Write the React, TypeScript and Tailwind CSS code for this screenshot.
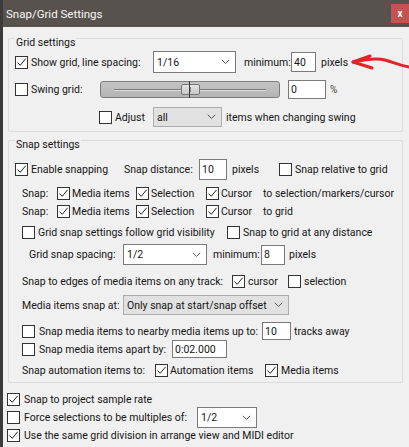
import React from "react";

function Check({ on }: { on?: boolean }) {
  return (
    <span className="w-[13px] h-[13px] shrink-0 border border-[#333333] bg-white flex items-center justify-center">
      {on && (
        <svg width="11" height="11" viewBox="0 0 11 11">
          <path d="M1.5 5.5 L4.2 8.3 L9.6 1.8" fill="none" stroke="#222222" strokeWidth="1" />
        </svg>
      )}
    </span>
  );
}

function Chevron() {
  return (
    <svg width="9" height="6" viewBox="0 0 9 6" className="shrink-0">
      <path d="M0.8 0.8 L4.5 4.5 L8.2 0.8" fill="none" stroke="#555555" strokeWidth="1" />
    </svg>
  );
}

function Combo({ cls, v, gray }: { cls: string; v: string; gray?: boolean }) {
  return (
    <div
      className={`${cls} shrink-0 border flex items-center justify-between pl-[3px] pr-[5px] ${
        gray ? "bg-[#e1e1e1] border-[#adadad]" : "bg-white border-[#7a7a7a]"
      }`}
    >
      <span>{v}</span>
      <Chevron />
    </div>
  );
}

function Input({ cls, v }: { cls: string; v: string }) {
  return (
    <div className={`${cls} shrink-0 bg-white border border-[#7a7a7a] flex items-center pl-[2px]`}>
      {v}
    </div>
  );
}

function Slider() {
  return (
    <div className="relative w-[180px] h-[17px] shrink-0 rounded-[3px] border border-[#7c7c7c] bg-gradient-to-b from-[#c4c4c4] to-[#b4b4b4] flex items-center px-[13px]">
      <div className="flex-1 h-[2px] border-t border-[#7a7a7a] border-b border-b-[#dcdcdc]" />
      <div className="absolute left-[80px] top-[2px] w-[19px] h-[11px] rounded-[2px] border border-[#777777] bg-gradient-to-b from-[#e4e4e4] to-[#c8c8c8] flex items-center justify-center">
        <div className="w-[1px] h-[5px] bg-[#888888]" />
      </div>
      <div className="absolute left-[88px] -top-[1px] w-[1px] h-[17px] bg-[#3a3a3a]" />
    </div>
  );
}

export default function App() {
  return (
    <div className="relative w-[409px] h-[447px] overflow-hidden flex bg-[#f0f0f0] text-[10.5px] leading-[13px] whitespace-nowrap text-[#151515] font-['Roboto','Liberation_Sans',sans-serif]">
      <div className="w-[3px] shrink-0 bg-[#3b3b3b]" />
      <div className="flex-1 flex flex-col">
        <div className="h-[27px] shrink-0 bg-[#57524d] flex items-start">
          <div className="flex-1 pl-[3px] pt-[7px] text-[11.5px] leading-[14px] text-[#f7f7f7]">Snap/Grid Settings</div>
          <div className="mt-[4px] w-[18px] h-[19px] bg-[#c75050] text-white text-[10px] font-bold flex items-center justify-center">
            x
          </div>
        </div>

        <div className="pl-[5px] flex flex-col">
          {/* Grid settings */}
          <div className="mt-[11px] w-[395px] h-[94px] border border-[#dcdcdc] rounded-[2px] flex flex-col">
            <div className="-mt-[3px] ml-[6px] px-[1px] w-fit h-[13px] bg-[#f0f0f0]">Grid settings</div>
            <div className="mt-[2px] h-[22px] pl-[6px] flex items-center">
              <div className="w-[138px] flex items-center gap-[3px]">
                <Check on />
                <span>Show grid, line spacing:</span>
              </div>
              <Combo cls="w-[83px] h-[22px]" v="1/16" />
              <span className="ml-[8px] w-[47px]">minimum:</span>
              <Input cls="w-[25px] h-[20px]" v="40" />
              <span className="ml-[5px]">pixels</span>
            </div>
            <div className="mt-[7px] h-[19px] pl-[6px] flex items-center">
              <div className="w-[85px] flex items-center gap-[3px]">
                <Check />
                <span>Swing grid:</span>
              </div>
              <Slider />
              <Input cls="ml-[8px] w-[38px] h-[19px]" v="0" />
              <span className="ml-[4px] text-[10px] text-[#444444]">%</span>
            </div>
            <div className="mt-[8px] h-[20px] pl-[90px] flex items-center">
              <div className="w-[54px] flex items-center gap-[3px]">
                <Check />
                <span>Adjust</span>
              </div>
              <Combo cls="w-[69px] h-[20px]" v="all" gray />
              <span className="ml-[4px]">items when changing swing</span>
            </div>
          </div>

          {/* Snap settings */}
          <div className="mt-[8px] w-[395px] h-[243px] border border-[#dcdcdc] rounded-[2px] flex flex-col">
            <div className="-mt-[3px] ml-[6px] px-[1px] w-fit h-[13px] bg-[#f0f0f0]">Snap settings</div>
            <div className="mt-[8px] h-[21px] pl-[6px] flex items-center">
              <div className="w-[109px] flex items-center gap-[3px]">
                <Check on />
                <span>Enable snapping</span>
              </div>
              <span className="w-[75px]">Snap distance:</span>
              <Input cls="w-[28px] h-[21px]" v="10" />
              <span className="ml-[5px] w-[47px]">pixels</span>
              <div className="flex items-center gap-[3px]">
                <Check />
                <span>Snap relative to grid</span>
              </div>
            </div>
            <div className="mt-[4px] h-[18px] pl-[13px] flex items-center">
              <span className="w-[35px]">Snap:</span>
              <div className="w-[79px] flex items-center gap-[2px]">
                <Check on />
                <span>Media items</span>
              </div>
              <div className="w-[70px] flex items-center gap-[2px]">
                <Check on />
                <span>Selection</span>
              </div>
              <div className="w-[57px] flex items-center gap-[2px]">
                <Check on />
                <span>Cursor</span>
              </div>
              <span>to selection/markers/cursor</span>
            </div>
            <div className="h-[18px] pl-[13px] flex items-center">
              <span className="w-[35px]">Snap:</span>
              <div className="w-[79px] flex items-center gap-[2px]">
                <Check on />
                <span>Media items</span>
              </div>
              <div className="w-[70px] flex items-center gap-[2px]">
                <Check on />
                <span>Selection</span>
              </div>
              <div className="w-[57px] flex items-center gap-[2px]">
                <Check on />
                <span>Cursor</span>
              </div>
              <span>to grid</span>
            </div>
            <div className="mt-[3px] h-[18px] pl-[13px] flex items-center">
              <div className="w-[205px] flex items-center gap-[3px]">
                <Check />
                <span>Grid snap settings follow grid visibility</span>
              </div>
              <div className="flex items-center gap-[3px]">
                <Check />
                <span>Snap to grid at any distance</span>
              </div>
            </div>
            <div className="mt-[3px] h-[21px] pl-[20px] flex items-center">
              <span className="w-[94px]">Grid snap spacing:</span>
              <Combo cls="w-[84px] h-[21px]" v="1/2" />
              <span className="ml-[6px] w-[48px]">minimum:</span>
              <Input cls="w-[24px] h-[20px]" v="8" />
              <span className="ml-[4px]">pixels</span>
            </div>
            <div className="mt-[7px] h-[18px] pl-[13px] flex items-center">
              <span className="w-[210px]">Snap to edges of media items on any track:</span>
              <div className="w-[56px] flex items-center gap-[3px]">
                <Check on />
                <span>cursor</span>
              </div>
              <div className="flex items-center gap-[3px]">
                <Check />
                <span>selection</span>
              </div>
            </div>
            <div className="mt-[5px] h-[20px] pl-[13px] flex items-center">
              <span className="w-[101px]">Media items snap at:</span>
              <Combo cls="w-[166px] h-[20px]" v="Only snap at start/snap offset" gray />
            </div>
            <div className="mt-[7px] h-[18px] pl-[13px] flex items-center">
              <div className="w-[240px] flex items-center gap-[4px]">
                <Check />
                <span>Snap media items to nearby media items up to:</span>
              </div>
              <Input cls="w-[29px] h-[18px]" v="10" />
              <span className="ml-[3px]">tracks away</span>
            </div>
            <div className="h-[18px] pl-[13px] flex items-center">
              <div className="w-[150px] flex items-center gap-[4px]">
                <Check />
                <span>Snap media items apart by:</span>
              </div>
              <Input cls="w-[55px] h-[18px]" v="0:02.000" />
            </div>
            <div className="mt-[3px] h-[18px] pl-[13px] flex items-center">
              <span className="w-[133px]">Snap automation items to:</span>
              <div className="w-[110px] flex items-center gap-[2px]">
                <Check on />
                <span>Automation items</span>
              </div>
              <div className="flex items-center gap-[3px]">
                <Check on />
                <span>Media items</span>
              </div>
            </div>
          </div>
        </div>

        <div className="pl-[4px] flex flex-col">
          <div className="mt-[8px] h-[16px] flex items-center gap-[4px]">
            <Check on />
            <span>Snap to project sample rate</span>
          </div>
          <div className="h-[21px] flex items-center">
            <div className="w-[190px] flex items-center gap-[4px]">
              <Check />
              <span>Force selections to be multiples of:</span>
            </div>
            <Combo cls="w-[60px] h-[21px]" v="1/2" />
          </div>
          <div className="h-[14px] flex items-center gap-[4px]">
            <Check on />
            <span>Use the same grid division in arrange view and MIDI editor</span>
          </div>
        </div>
      </div>

      <svg className="absolute left-[350px] top-[52px]" width="59" height="20" viewBox="0 0 59 20">
        <path d="M3 10 C 12 8, 25 5, 35 8 S 52 14, 59 15" fill="none" stroke="#e3222a" strokeWidth="3" strokeLinecap="round" />
        <path d="M20 4 L3 10 L22 16" fill="none" stroke="#e3222a" strokeWidth="3" strokeLinecap="round" strokeLinejoin="round" />
      </svg>
    </div>
  );
}
